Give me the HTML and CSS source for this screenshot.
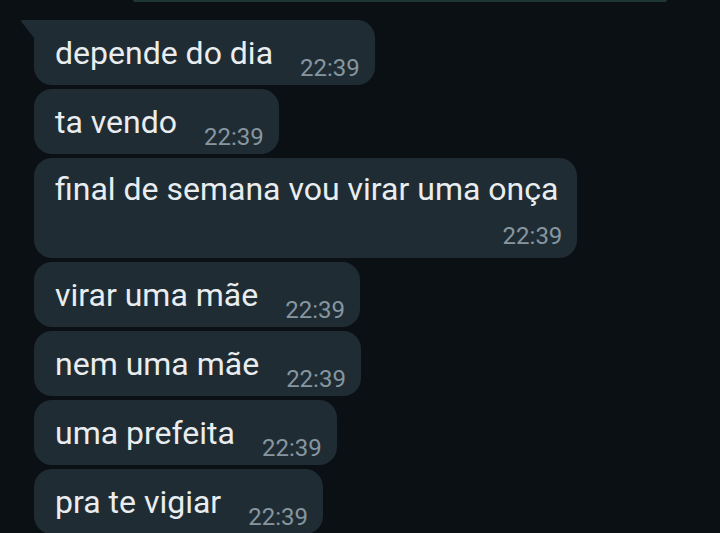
FILE: index.html
```html
<!DOCTYPE html>
<html lang="pt">
<head>
<meta charset="utf-8">
<link rel="stylesheet" href="styles.css">
</head>
<body>
<div class="chat">
  <div class="out-edge"></div>
  <div class="msgs">
    <div class="bubble first">
      <span class="txt">depende do dia</span><span class="time">22:39</span>
    </div>
    <div class="bubble">
      <span class="txt">ta vendo</span><span class="time">22:39</span>
    </div>
    <div class="bubble stack">
      <span class="txt">final de semana vou virar uma onça</span><span class="time">22:39</span>
    </div>
    <div class="bubble">
      <span class="txt">virar uma mãe</span><span class="time">22:39</span>
    </div>
    <div class="bubble">
      <span class="txt">nem uma mãe</span><span class="time">22:39</span>
    </div>
    <div class="bubble">
      <span class="txt">uma prefeita</span><span class="time">22:39</span>
    </div>
    <div class="bubble">
      <span class="txt">pra te vigiar</span><span class="time">22:39</span>
    </div>
  </div>
</div>
</body>
</html>
```
FILE: styles.css
```css
html, body {
  margin: 0;
  padding: 0;
  background: #0b1014;
  height: 100%;
  overflow: hidden;
}
.chat {
  font-family: Roboto, "Noto Sans", sans-serif;
  display: flex;
  flex-direction: column;
}
.out-edge {
  margin-left: 133px;
  width: 534px;
  height: 2px;
  background: #1d3833;
  border-radius: 0 0 10px 10px;
}
.msgs {
  margin-top: 18px;
  padding-left: 34px;
  display: flex;
  flex-direction: column;
  align-items: flex-start;
  gap: 4px;
}
.bubble {
  position: relative;
  display: flex;
  align-items: flex-end;
  background: #202c33;
  border-radius: 18px;
  height: 65px;
  box-sizing: border-box;
  padding: 14px 15px 4px 21px;
}
.bubble.first {
  border-top-left-radius: 0;
}
.bubble.first::before {
  content: "";
  position: absolute;
  left: -14px;
  top: 0;
  width: 14px;
  height: 18px;
  background: #202c33;
  clip-path: polygon(0 0, 100% 0, 100% 100%);
  border-top-left-radius: 3px;
}
.txt {
  color: #e9edef;
  font-size: 32px;
  line-height: 37px;
  margin-bottom: 9px;
  white-space: nowrap;
}
.time {
  color: #8696a0;
  font-size: 24px;
  line-height: 26px;
  margin-left: 27px;
  white-space: nowrap;
}
.bubble.stack {
  height: 100px;
  flex-direction: column;
  align-items: stretch;
  padding: 13px 19px 7px 21px;
}
.bubble.stack .txt {
  margin-bottom: 15px;
}
.bubble.stack .time {
  align-self: flex-end;
  margin-right: -4px;
}
```
